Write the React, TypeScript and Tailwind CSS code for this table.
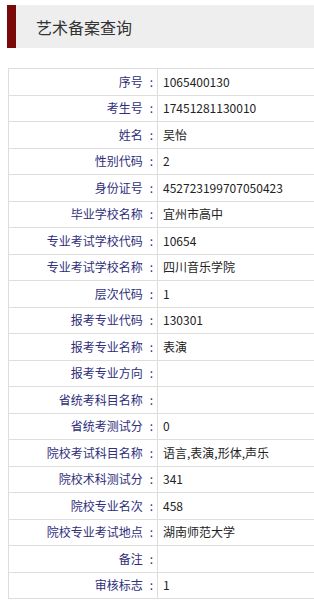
import React from 'react';

const rows: [string, string][] = [
  ['序号', '1065400130'],
  ['考生号', '17451281130010'],
  ['姓名', '吴怡'],
  ['性别代码', '2'],
  ['身份证号', '452723199707050423'],
  ['毕业学校名称', '宜州市高中'],
  ['专业考试学校代码', '10654'],
  ['专业考试学校名称', '四川音乐学院'],
  ['层次代码', '1'],
  ['报考专业代码', '130301'],
  ['报考专业名称', '表演'],
  ['报考专业方向', ''],
  ['省统考科目名称', ''],
  ['省统考测试分', '0'],
  ['院校考试科目名称', '语言,表演,形体,声乐'],
  ['院校术科测试分', '341'],
  ['院校专业名次', '458'],
  ['院校专业考试地点', '湖南师范大学'],
  ['备注', ''],
  ['审核标志', '1'],
];

export default function App() {
  return (
    <div
      className="w-[314px] h-[600px] bg-white overflow-hidden"
      style={{ fontFamily: '"Noto Sans CJK SC", "Liberation Sans", sans-serif' }}
    >
      {/* 标题栏 */}
      <div className="mt-[5px] ml-[7px] h-[43px] bg-[#eeeeee] border-l-[9px] border-[#7a0a0a] flex items-center pl-[20px]">
        <span className="text-[16px] text-[#333]">艺术备案查询</span>
      </div>

      {/* 信息表 */}
      <div className="mt-[20px] ml-[8px] w-[306px] border-t border-l border-[#dddddd]">
        {rows.map(([label, value]) => (
          <div key={label} className="flex h-[26.5px] border-b border-[#dddddd] text-[12px]">
            <div className="w-[149px] flex justify-end items-center text-[#2e2e7a] border-r border-[#dddddd] pr-[4px]">
              <span>{label}</span>
              <span className="ml-[7px]">:</span>
            </div>
            <div className="flex-1 pl-[5px] text-[#222] flex items-center">{value}</div>
          </div>
        ))}
      </div>
    </div>
  );
}
